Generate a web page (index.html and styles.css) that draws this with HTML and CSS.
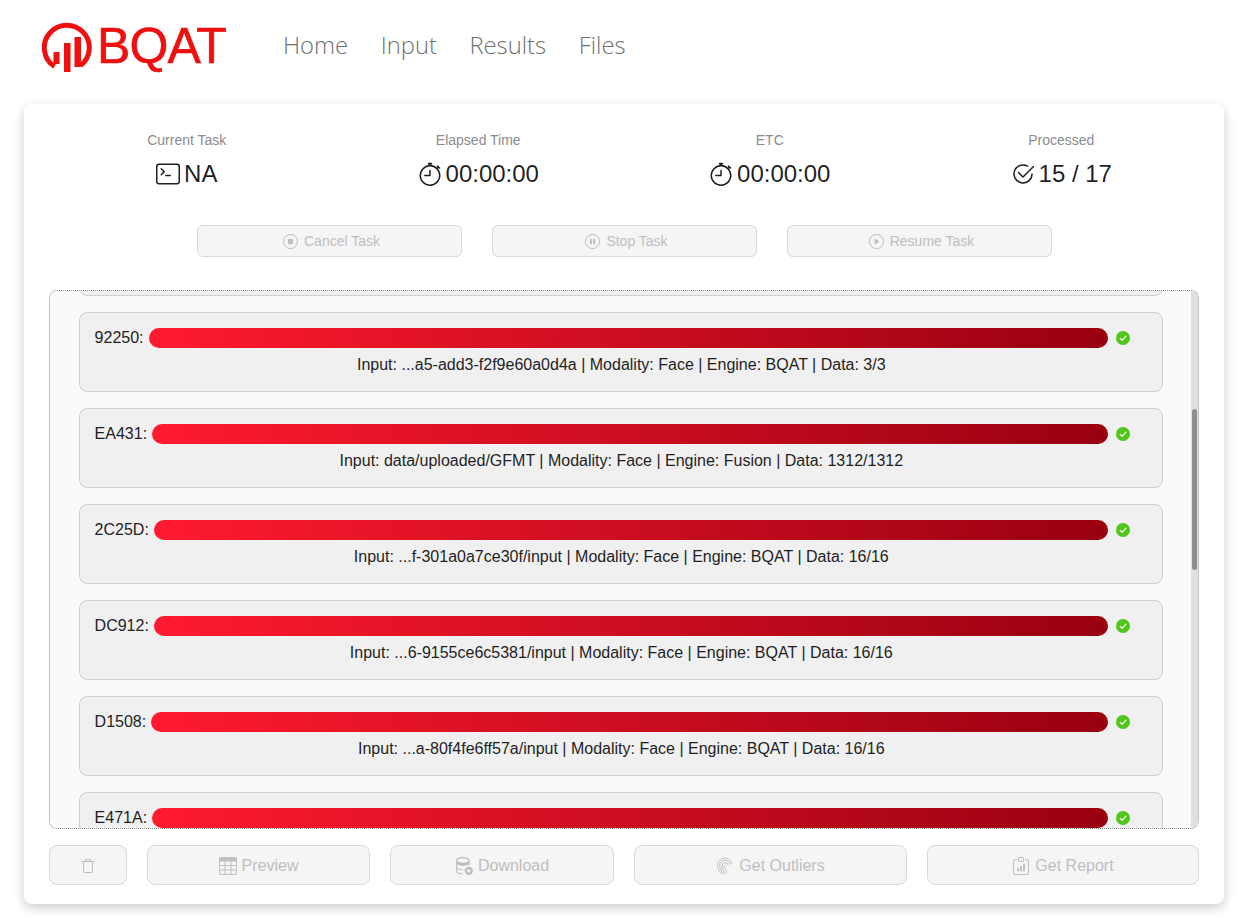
FILE: index.html
```html
<!DOCTYPE html>
<html lang="en">
<head>
<meta charset="utf-8">
<title>BQAT</title>
<link rel="stylesheet" href="styles.css">
</head>
<body>
<svg class="defs" width="0" height="0" aria-hidden="true">
  <defs>
    <symbol id="i-stopwatch" viewBox="0 0 16 16"><path d="M8.5 5.6a.5.5 0 1 0-1 0v2.9h-3a.5.5 0 0 0 0 1H8a.5.5 0 0 0 .5-.5V5.6z"/><path d="M6.5 1A.5.5 0 0 1 7 .5h2a.5.5 0 0 1 0 1v.57c1.36.196 2.594.78 3.584 1.64a.715.715 0 0 1 .012-.013l.354-.354-.354-.353a.5.5 0 0 1 .707-.708l1.414 1.415a.5.5 0 1 1-.707.707l-.353-.354-.354.354a.512.512 0 0 1-.013.012A7 7 0 1 1 7 2.071V1.5a.5.5 0 0 1-.5-.5zM8 3a6 6 0 1 0 .001 12A6 6 0 0 0 8 3z"/></symbol>
    <symbol id="i-check" viewBox="0 0 14 14"><circle cx="7" cy="7" r="7" fill="#52c41a"/><path d="M3.9 7.1 6.1 9.3 10.2 4.9" fill="none" stroke="#fff" stroke-width="1.2"/></symbol>
  </defs>
</svg>
<header class="nav">
  <a class="brand" href="#">
    <svg class="brand-mark" viewBox="0 0 50 50"><path d="M12.500 44.500A22.500 22.500 0 1 1 38.500 43.500" fill="none" stroke="#ee0f0f" stroke-width="5"/><path fill="#ee0f0f" d="M11.500 30h6v12h-6zM22 21h6.500v29H22zM32.500 15H39v30h-6.500z"/></svg>
    <span class="brand-name">BQAT</span>
  </a>
  <nav class="menu">
    <a href="#">Home</a>
    <a href="#">Input</a>
    <a href="#">Results</a>
    <a href="#">Files</a>
  </nav>
</header>

<main class="card">
  <section class="stats">
    <div class="stat">
      <div class="stat-title">Current Task</div>
      <div class="stat-value">
        <svg class="stat-icon" viewBox="0 0 16 16"><path d="M6 9a.5.5 0 0 1 .5-.5h3a.5.5 0 0 1 0 1h-3A.5.5 0 0 1 6 9zM3.854 4.146a.5.5 0 1 0-.708.708L4.793 6.5 3.146 8.146a.5.5 0 1 0 .708.708l2-2a.5.5 0 0 0 0-.708l-2-2z"/><path d="M2 1a2 2 0 0 0-2 2v10a2 2 0 0 0 2 2h12a2 2 0 0 0 2-2V3a2 2 0 0 0-2-2H2zm12 1a1 1 0 0 1 1 1v10a1 1 0 0 1-1 1H2a1 1 0 0 1-1-1V3a1 1 0 0 1 1-1h12z"/></svg>
        <span>NA</span>
      </div>
    </div>
    <div class="stat">
      <div class="stat-title">Elapsed Time</div>
      <div class="stat-value"><svg class="stat-icon"><use href="#i-stopwatch"/></svg><span>00:00:00</span></div>
    </div>
    <div class="stat">
      <div class="stat-title">ETC</div>
      <div class="stat-value"><svg class="stat-icon"><use href="#i-stopwatch"/></svg><span>00:00:00</span></div>
    </div>
    <div class="stat">
      <div class="stat-title">Processed</div>
      <div class="stat-value">
        <svg class="stat-icon" viewBox="0 0 16 16"><path d="M2.5 8a5.500 5.500 0 0 1 8.250-4.764.5.5 0 0 0 .5-.866A6.500 6.500 0 1 0 14.500 8a.5.5 0 0 0-1 0 5.500 5.500 0 1 1-11 0z"/><path d="M15.354 3.354a.5.5 0 0 0-.708-.708L8 9.293 5.354 6.646a.5.5 0 1 0-.708.708l3 3a.5.5 0 0 0 .708 0l7-7z"/></svg>
        <span>15 / 17</span>
      </div>
    </div>
  </section>

  <section class="controls">
    <button class="btn btn-sm" disabled><svg class="btn-icon" viewBox="0 0 16 16"><path d="M8 15A7 7 0 1 1 8 1a7 7 0 0 1 0 14zm0 1A8 8 0 1 0 8 0a8 8 0 0 0 0 16z"/><rect x="5.200" y="5.200" width="5.600" height="5.600" rx="1"/></svg>Cancel Task</button>
    <button class="btn btn-sm" disabled><svg class="btn-icon" viewBox="0 0 16 16"><path d="M8 15A7 7 0 1 1 8 1a7 7 0 0 1 0 14zm0 1A8 8 0 1 0 8 0a8 8 0 0 0 0 16z"/><rect x="5.200" y="5" width="2.100" height="6" rx="1"/><rect x="8.700" y="5" width="2.100" height="6" rx="1"/></svg>Stop Task</button>
    <button class="btn btn-sm" disabled><svg class="btn-icon" viewBox="0 0 16 16"><path d="M8 15A7 7 0 1 1 8 1a7 7 0 0 1 0 14zm0 1A8 8 0 1 0 8 0a8 8 0 0 0 0 16z"/><path d="M6.271 5.055a.5.5 0 0 1 .52.038l3.5 2.500a.5.5 0 0 1 0 .814l-3.500 2.500A.5.5 0 0 1 6 10.500v-5a.5.5 0 0 1 .271-.445z"/></svg>Resume Task</button>
  </section>

  <section class="tasks">
    <div class="task-list">
      <div class="task"></div>
      <article class="task"><div class="task-row"><span>92250:</span><div class="bar"></div><svg class="ok"><use href="#i-check"/></svg></div><p class="task-info">Input: ...a5-add3-f2f9e60a0d4a | Modality: Face | Engine: BQAT | Data: 3/3</p></article>
      <article class="task"><div class="task-row"><span>EA431:</span><div class="bar"></div><svg class="ok"><use href="#i-check"/></svg></div><p class="task-info">Input: data/uploaded/GFMT | Modality: Face | Engine: Fusion | Data: 1312/1312</p></article>
      <article class="task"><div class="task-row"><span>2C25D:</span><div class="bar"></div><svg class="ok"><use href="#i-check"/></svg></div><p class="task-info">Input: ...f-301a0a7ce30f/input | Modality: Face | Engine: BQAT | Data: 16/16</p></article>
      <article class="task"><div class="task-row"><span>DC912:</span><div class="bar"></div><svg class="ok"><use href="#i-check"/></svg></div><p class="task-info">Input: ...6-9155ce6c5381/input | Modality: Face | Engine: BQAT | Data: 16/16</p></article>
      <article class="task"><div class="task-row"><span>D1508:</span><div class="bar"></div><svg class="ok"><use href="#i-check"/></svg></div><p class="task-info">Input: ...a-80f4fe6ff57a/input | Modality: Face | Engine: BQAT | Data: 16/16</p></article>
      <article class="task"><div class="task-row"><span>E471A:</span><div class="bar"></div><svg class="ok"><use href="#i-check"/></svg></div></article>
    </div>
    <div class="scrollbar"><div class="thumb"></div></div>
  </section>

  <section class="actions">
    <button class="btn btn-lg" disabled aria-label="Delete"><svg class="trash-icon" viewBox="0 0 16 16"><path d="M3.500 4.500V13A1.500 1.500 0 0 0 5 14.500h6a1.500 1.500 0 0 0 1.500-1.500V4.500M1.500 3.500h13M5.500 3.500V2.500a1 1 0 0 1 1-1h3a1 1 0 0 1 1 1v1"/></svg></button>
    <button class="btn btn-lg" disabled><svg class="lg-icon" viewBox="0 0 18 18"><path d="M2 0h14a2 2 0 0 1 2 2v14a2 2 0 0 1-2 2H2a2 2 0 0 1-2-2V2a2 2 0 0 1 2-2zM1 4.500V8h4.500V4.500H1zm5.500 0V8h5V4.500h-5zm6 0V8H17V4.500h-4.500zM1 9v3.500h4.500V9H1zm5.500 0v3.500h5V9h-5zm6 0v3.500H17V9h-4.500zM1 13.500V16a1 1 0 0 0 1 1h3.500v-3.500H1zm5.500 0V17h5v-3.500h-5zm6 0V17H16a1 1 0 0 0 1-1v-2.500h-4.500z"/></svg>Preview</button>
    <button class="btn btn-lg" disabled><svg class="lg-icon" viewBox="0 0 16 16"><path d="M7 0C3.900 0 1 1 1 3v9.500c0 2 2.700 3 5.800 3v-1c-2.600 0-4.800-.8-4.800-2v-1.800C3.200 11.500 5 12 7 12v-1c-2.800 0-5-1-5-2V6.700C3.200 7.500 5 8 7 8s3.800-.5 5-1.300V7.500h1V3c0-2-2.900-3-6-3zm0 1c2.800 0 5 .9 5 2s-2.200 2-5 2-5-.9-5-2 2.200-2 5-2z"/><circle cx="12.300" cy="12.300" r="3.700"/><circle cx="12.300" cy="12.300" r="1.500" fill="#f5f5f5"/></svg>Download</button>
    <button class="btn btn-lg btn-print" disabled><svg class="print-icon" viewBox="0 0 16 18"><path d="M5 17C1.500 14 .5 11 .5 8.500a7.500 7.500 0 0 1 14.800-1.700"/><path d="M7 17C3.800 14 2.700 11 2.700 8.700a5.400 5.400 0 0 1 10.600-1.500"/><path d="M9 17C6 14 5 11 5 9a3.200 3.200 0 0 1 6.300-.9"/><path d="M10.500 15.500C8.500 13.500 7.300 11 7.300 9.300a1 1 0 0 1 1.900-.4"/></svg>Get Outliers</button>
    <button class="btn btn-lg" disabled><svg class="lg-icon" viewBox="0 0 16 18"><path d="M4 12a1 1 0 1 1 2 0v1.500a1 1 0 1 1-2 0V12zm6-4.500a1 1 0 1 1 2 0v6a1 1 0 1 1-2 0v-6zM7 10a1 1 0 0 1 2 0v3.500a1 1 0 1 1-2 0V10z"/><path d="M4 2H2.500A2.500 2.500 0 0 0 0 4.500v11A2.500 2.500 0 0 0 2.500 18h11a2.500 2.500 0 0 0 2.500-2.500v-11A2.500 2.500 0 0 0 13.500 2H12v1h1.500A1.500 1.500 0 0 1 15 4.500v11a1.500 1.500 0 0 1-1.500 1.500h-11A1.500 1.500 0 0 1 1 15.500v-11A1.500 1.500 0 0 1 2.500 3H4V2z"/><path d="M9.500 1a.5.5 0 0 1 .5.5v2a.5.5 0 0 1-.5.5h-3a.5.5 0 0 1-.5-.5v-2a.5.5 0 0 1 .5-.5h3zm-3-1A1.500 1.500 0 0 0 5 1.500v2A1.500 1.500 0 0 0 6.500 5h3A1.500 1.500 0 0 0 11 3.500v-2A1.500 1.500 0 0 0 9.500 0h-3z"/></svg>Get Report</button>
  </section>
</main>
</body>
</html>
```
FILE: styles.css
```css
* { box-sizing: border-box; }
html, body { margin: 0; padding: 0; }
body {
  width: 1237px;
  height: 918px;
  overflow: hidden;
  background: #fff;
  font-family: "Liberation Sans", Arial, sans-serif;
  color: rgba(0, 0, 0, 0.88);
}
.defs { position: absolute; }

.nav {
  display: flex;
  align-items: center;
  height: 92px;
  padding-left: 42px;
}
.brand {
  display: flex;
  align-items: center;
  gap: 5px;
  width: 241px;
  color: #ee0f0f;
  text-decoration: none;
}
.brand-mark { flex: none; width: 50px; height: 50px; margin-top: 2px; }
.brand-name {
  font-size: 50px;
  line-height: 1;
  letter-spacing: -0.9px;
  -webkit-text-stroke: 0.6px #ee0f0f;
}
.menu { display: flex; gap: 32.5px; margin-top: -2px; }
.menu a {
  color: #6f6f6f;
  font-family: "Open Sans", sans-serif;
  font-weight: 300;
  font-size: 23.8px;
  text-decoration: none;
}

.card {
  width: 1200px;
  height: 800px;
  margin: 12px 0 0 24px;
  padding: 25px 25px 19px;
  display: flex;
  flex-direction: column;
  background: #fff;
  border-radius: 8px;
  box-shadow: 0 4px 12px rgba(0, 0, 0, 0.2);
}

.stats {
  display: grid;
  grid-template-columns: repeat(4, 291.500px);
  margin-left: -8px;
  text-align: center;
}
.stat-title { font-size: 14px; line-height: 22px; color: #8c8c8c; }
.stat-value {
  display: flex;
  justify-content: center;
  align-items: center;
  gap: 4px;
  margin-top: 8px;
  font-size: 24px;
  line-height: 30px;
}
.stat-icon { width: 24px; height: 24px; fill: currentColor; }

.controls {
  display: flex;
  justify-content: center;
  gap: 30px;
  margin-top: 36px;
}
.btn {
  display: flex;
  justify-content: center;
  align-items: center;
  width: 265px;
  padding: 0;
  font-family: "Liberation Sans", Arial, sans-serif;
  color: #bfbfbf;
  background: #f5f5f5;
  border: 1px solid #d9d9d9;
}
.btn-sm {
  gap: 6px;
  height: 32px;
  padding-left: 5px;
  font-size: 14px;
  border-radius: 6px;
}
.btn-icon { width: 15px; height: 15px; fill: currentColor; }

.tasks {
  position: relative;
  height: 539px;
  margin-top: 33px;
  background: #fafafa;
  border: 1px dotted #8c8c8c;
  border-radius: 8px;
  overflow: hidden;
}
.task-list {
  display: flex;
  flex-direction: column;
  gap: 16px;
  margin: -75px 35px 0 29px;
}
.task {
  flex: none;
  height: 80px;
  padding: 15px 32px 0 14.6px;
  background: #f0f0f0;
  border: 1px solid #d0d0d0;
  border-radius: 8px;
  font-size: 16px;
  line-height: 20px;
  color: #1f1f1f;
}
.task-row { display: flex; align-items: center; gap: 5px; }
.bar {
  flex: 1;
  height: 20px;
  border-radius: 10px;
  background: linear-gradient(92deg, #ff1a30, #980010);
}
.ok { width: 14px; height: 14px; margin-left: 3px; }
.task-info { margin: 7px -18px 0 0; text-align: center; }

.scrollbar {
  position: absolute;
  top: 0;
  right: 0;
  bottom: 0;
  width: 7px;
  background: #e0e0e0;
}
.thumb {
  height: 161px;
  margin: 118px 0 0 1px;
  width: 5px;
  background: #8f8f8f;
  border-radius: 3px;
}

.actions {
  display: grid;
  grid-template-columns: 78fr 223fr 224fr 273fr 272fr;
  gap: 20px;
  margin-top: 16px;
}
.btn-lg {
  gap: 5px;
  width: auto;
  height: 40px;
  padding-top: 1px;
  font-size: 16px;
  border-radius: 8px;
}
.btn-print { gap: 6px; padding-left: 1px; }
.lg-icon { width: 18px; height: 18px; fill: currentColor; }
.trash-icon { width: 16px; height: 16px; fill: none; stroke: currentColor; stroke-width: 1.1; }
.print-icon { width: 16px; height: 18px; fill: none; stroke: currentColor; stroke-width: 1; }
```
